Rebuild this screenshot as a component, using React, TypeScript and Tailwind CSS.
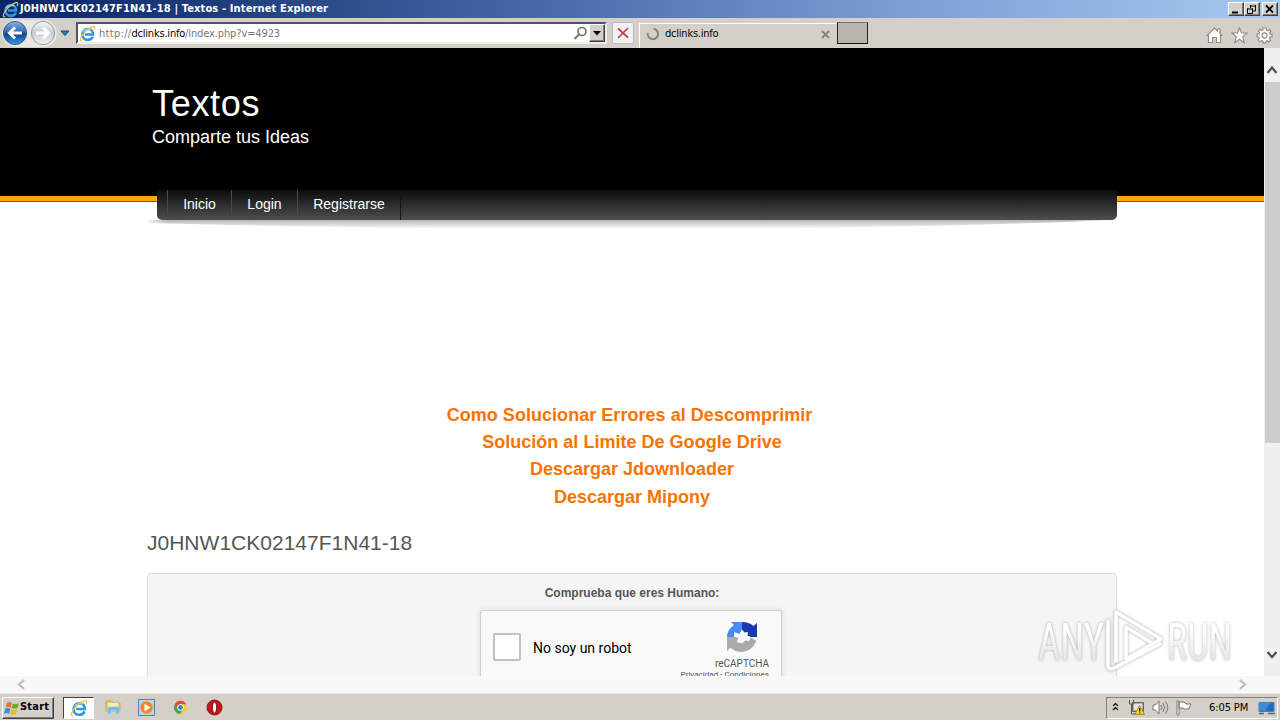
import { ReactNode } from "react";
import { clsx } from "clsx";

const navItems = [
  { label: "Inicio", width: "w-[63px]" },
  { label: "Login", width: "w-[65px]" },
  { label: "Registrarse", width: "w-[102px]" },
];

const helpLinks = [
  { label: "Como Solucionar Errores al Descomprimir", className: "-ml-[5px] h-[27px] tracking-[0.04px]" },
  { label: "Solución al Limite De Google Drive", className: "h-[27px] tracking-[0.02px]" },
  { label: "Descargar Jdownloader", className: "h-[28px]" },
  { label: "Descargar Mipony", className: "h-[27px]" },
];

function IeLogo({ size }: { size: number }) {
  return (
    <svg width={size} height={size} viewBox="0 0 16 16" fill="none" className="shrink-0">
      <path d="M13 11C12 13.2 10.3 14 8.2 14C5.2 14 3.2 12 3.2 9C3.2 6 5.3 3.8 8.4 3.8C11.4 3.8 13.2 6 13.2 8.9H5.5" stroke="#2f97dc" strokeWidth="2.4" />
      <path d="M4 6.7C5.2 4.6 8.6 3.2 11.4 4.6" stroke="#8ad9f7" strokeWidth="1.2" />
      <path d="M3 14.6C1 15.8 .6 13.4 2.4 10.6C5 6.2 11.2 1.2 14 1.5C15.3 1.7 15 3.4 14.2 4.8" stroke="#efc548" strokeWidth="1.1" />
    </svg>
  );
}

function ArrowCircle({ forward }: { forward?: boolean }) {
  return (
    <svg width="26" height="26" viewBox="0 0 26 26" className="shrink-0">
      <defs>
        <linearGradient id="backFill" x1="0" y1="0" x2="0" y2="1">
          <stop offset="0" stopColor="#8ab3e5" />
          <stop offset=".45" stopColor="#3268b7" />
          <stop offset=".55" stopColor="#123f91" />
          <stop offset="1" stopColor="#2fa0e6" />
        </linearGradient>
        <linearGradient id="forwardFill" x1="0" y1="0" x2="0" y2="1">
          <stop offset="0" stopColor="#f7f8fa" />
          <stop offset=".5" stopColor="#c4cbd3" />
          <stop offset="1" stopColor="#f4f5f7" />
        </linearGradient>
      </defs>
      <circle cx="13" cy="13" r="11.6" fill={forward ? "url(#forwardFill)" : "url(#backFill)"} stroke={forward ? "#9a9da3" : "#465d83"} />
      <path
        d={forward ? "M6 13H18M13 7.5L18.5 13L13 18.5" : "M20 13H8M13 7.5L7.5 13L13 18.5"}
        fill="none"
        stroke="#fff"
        strokeWidth="3"
      />
    </svg>
  );
}

function WindowButton({ children, className }: { children: ReactNode; className?: string }) {
  return (
    <div className={clsx("flex h-[14px] w-4 items-center justify-center border border-t-white border-r-[#404040] border-b-[#404040] border-l-white bg-[#d4d0c8] shadow-[inset_-1px_-1px_0_#808080]", className)}>
      <svg width="12" height="11" viewBox="0 0 12 11" fill="none" stroke="#000">
        {children}
      </svg>
    </div>
  );
}

function TitleBar() {
  return (
    <div className="flex h-[18px] items-center bg-[linear-gradient(90deg,#0a246a_0%,#254583_22%,#4d6ead_45%,#7a9ed3_70%,#a6caf0_100%)] pr-[2px] pl-[2px]">
      <IeLogo size={17} />
      <span className="ml-px text-[11px] leading-[18px] font-bold tracking-[0.14px] whitespace-nowrap text-white">
        J0HNW1CK02147F1N41-18 | Textos - Internet Explorer
      </span>
      <div className="ml-auto flex">
        <WindowButton>
          <path d="M2 8.5H8" strokeWidth="2" />
        </WindowButton>
        <WindowButton>
          <path d="M4 2H10M4.5 1V4M9.5 1V7H7M1 5H7M1.5 4.5V9.5H6.5V4.5" />
        </WindowButton>
        <WindowButton className="ml-[2px]">
          <path d="M2 1.5L9 8.5M9 1.5L2 8.5" strokeWidth="1.8" />
        </WindowButton>
      </div>
    </div>
  );
}

function Toolbar() {
  return (
    <div className="flex h-[30px] items-start bg-[#d4d0c8] pl-[2px]">
      <div className="mt-[2px] flex h-[27px] w-[55px] gap-[2px] rounded-full bg-[#e9e7e3]">
        <ArrowCircle />
        <ArrowCircle forward />
      </div>
      <svg width="10" height="7" viewBox="0 0 10 7" className="mt-[12px] ml-[3px]">
        <path d="M1 1H9L5 5.5Z" fill="#1b84bd" stroke="#1b436c" />
      </svg>
      <div className="mt-[4px] ml-[6px] flex h-[22px] w-[531px] items-center border-2 border-t-[#55515e] border-r-[#efede8] border-b-[#efede8] border-l-[#55515e] bg-white pl-px">
        <IeLogo size={17} />
        <span className="mt-[2px] ml-[3px] text-[11px] whitespace-nowrap text-[#777]">
          <span className="tracking-[0.3px]">http://</span>
          <span className="tracking-[-0.2px] text-black">dclinks.info</span>
          <span className="tracking-[-0.12px]">/index.php?v=4923</span>
        </span>
        <svg width="15" height="15" viewBox="0 0 15 15" fill="none" stroke="#777" strokeWidth="1.7" className="ml-auto">
          <circle cx="9" cy="5.5" r="4" />
          <path d="M6 8.5L1.5 13" strokeWidth="2" />
        </svg>
        <div className="ml-px flex h-[18px] w-[16px] items-center justify-center border border-t-white border-r-[#404040] border-b-[#404040] border-l-white bg-[#d4d0c8] shadow-[inset_-1px_-1px_0_#808080]">
          <svg width="8" height="5">
            <path d="M0 0H8L4 4.5Z" />
          </svg>
        </div>
      </div>
      <div className="mt-[4px] ml-[5px] flex h-[22px] w-[22px] items-center justify-center rounded-[2px] border border-[#b4b9c2] bg-[#f2f1f3]">
        <svg width="12" height="12" viewBox="0 0 12 12" stroke="#bc4540" strokeWidth="1.7">
          <path d="M1 1.5L11 10.5M11 1L1 11" />
        </svg>
      </div>
      <div className="mt-[5px] ml-[5px] flex h-[25px] w-[197px] items-center border-t border-l border-white pr-[6px] pb-[4px] pl-[6px]">
        <svg width="14" height="14" viewBox="0 0 14 14" fill="none" stroke="#85817b" strokeWidth="2">
          <path d="M7.5 1.8A5.2 5.2 0 1 1 1.8 6" />
        </svg>
        <span className="ml-[5px] text-[11px] tracking-[-0.22px]">dclinks.info</span>
        <svg width="9" height="9" viewBox="0 0 9 9" stroke="#85817b" strokeWidth="1.8" className="ml-auto">
          <path d="M1 1L8 8M8 1L1 8" />
        </svg>
      </div>
      <div className="mt-[4px] ml-[1px] h-[22px] w-[31px] border border-t-[#77736e] border-r-[#222] border-b-[#111] border-l-[#222] bg-[#b9b4ac]" />
      <div className="mt-[9px] mr-[7px] ml-auto flex gap-[8px]">
        <svg width="17" height="17" viewBox="0 0 17 17" fill="#fff" stroke="#8f8b86" strokeWidth="1.2">
          <path d="M2.5 8.5H1L8.5 1L11.5 4V2H14V6.5L16 8.5H14.5V15.5H10.5V10.5H6.5V15.5H2.5Z" />
        </svg>
        <svg width="17" height="17" viewBox="0 0 17 17" fill="#fff" stroke="#8f8b86" strokeWidth="1.1">
          <path d="M8.5 .8L10.5 6H16.2L11.7 9.6L13.3 15.6L8.5 12.2L3.7 15.6L5.3 9.6L.8 6H6.5Z" />
        </svg>
        <svg width="17" height="17" viewBox="0 0 17 17" fill="#fff" stroke="#8f8b86" strokeWidth="1.1">
          <path d="M7 1H10L10.4 3L12 3.6L13.7 2.4L15 4.3L13.6 5.7L14 7H16V10H14L13.4 11.6L14.6 13.2L12.8 15L11.2 13.7L10 14.1V16H7V14.1L5.6 13.6L4 14.8L2.1 13L3.4 11.3L3 10H1V7H3L3.5 5.5L2.2 4L4 2.2L5.5 3.4L7 3Z" />
          <circle cx="8.5" cy="8.5" r="2.6" />
        </svg>
      </div>
    </div>
  );
}

function SiteHeader() {
  return (
    <header>
      <div className="h-[148px] bg-black pt-[35px] pl-[152px] text-white">
        <h1 className="text-[36px] leading-[41px] tracking-[0.7px]">Textos</h1>
        <p className="mt-[3px] text-[18px] leading-[21px]">Comparte tus Ideas</p>
      </div>
      <div className="h-[6px] border-b border-[#75601f] bg-[#ffa60b]" />
      <nav className="relative -mt-[12px] ml-[157px] flex h-[30px] w-[960px] rounded-b-[5px] bg-linear-to-b from-[#0c0c0c] via-[#2e2e2e] to-[#4e4e4e] pl-[10px] text-[14px] leading-[28px] text-white">
        {navItems.map((item) => (
          <a key={item.label} className={clsx("box-content border-r border-l border-r-[#161616] border-l-[#4a4a4a] text-center [&+a]:-ml-px", item.width)}>
            {item.label}
          </a>
        ))}
      </nav>
      <svg width="970" height="10" viewBox="0 0 970 10" className="ml-[147px] block">
        <defs>
          <linearGradient id="navShadow" x1="0" y1="0" x2="0" y2="1">
            <stop offset="0" stopColor="#b5b5b5" />
            <stop offset="1" stopColor="#fff" />
          </linearGradient>
          <linearGradient id="shadowEnds" x1="0" y1="0" x2="1" y2="0">
            <stop offset="0" stopColor="#fff" stopOpacity=".8" />
            <stop offset=".02" stopColor="#fff" stopOpacity="0" />
            <stop offset=".95" stopColor="#fff" stopOpacity="0" />
            <stop offset="1" stopColor="#fff" stopOpacity=".9" />
          </linearGradient>
        </defs>
        <path d="M1 0H969Q750 9 485 9Q220 9 1 3Z" fill="url(#navShadow)" />
        <path d="M0 0H970V10H0Z" fill="url(#shadowEnds)" />
      </svg>
    </header>
  );
}

function RecaptchaLogo() {
  return (
    <svg width="32" height="32" viewBox="0 0 32 32">
      <path d="M5 1H16V9L13 14L8 11.5V16H1Q1 9 8 4Z" fill="#4a8af4" />
      <path d="M16 1Q23 1 27.5 5L31 2V16H16V8Z" fill="#1c3aa9" />
      <path d="M1 16V30L4.5 26.5Q9 31 16 31Q25 31 30.5 20L24 16H14Z" fill="#ababab" />
      <path d="M8.5 11L13.5 13L16 8.5L18.5 11.5L22 11L21.5 14.5L25 16L23 20L19.5 19.5L16 22.5L10.5 21L12.5 17.5L8.5 15Z" fill="#f9f9f9" />
    </svg>
  );
}

function Captcha() {
  return (
    <div className="mt-[9px] ml-[332px] flex h-[78px] w-[302px] justify-between rounded-[3px] border border-[#cfcfcf] bg-[#f9f9f9] pr-[12px] pl-[12px] shadow-[0_0_4px_1px_rgba(0,0,0,0.08)]">
      <div className="flex h-[72px] shrink-0 items-center">
        <div className="h-7 w-7 rounded-[2px] border-2 border-[#c1c1c1] bg-white" />
        <span className="mt-[2px] ml-3 font-['Roboto',sans-serif] text-[14px] whitespace-nowrap text-black">No soy un robot</span>
      </div>
      <div className="flex flex-col items-end pt-[10px] text-[#555]">
        <div className="mr-[11px]">
          <RecaptchaLogo />
        </div>
        <span className="mt-[4px] font-['Roboto',sans-serif] text-[10px] leading-[14px]">reCAPTCHA</span>
        <span className="-mt-px font-['Roboto',sans-serif] text-[8px] leading-[10px] tracking-[0.03px] whitespace-nowrap">Privacidad - Condiciones</span>
      </div>
    </div>
  );
}

function Page() {
  return (
    <main className="h-[628px] w-[1264px] overflow-hidden bg-white font-['Liberation_Sans',Arial,sans-serif] [font-stretch:normal]">
      <SiteHeader />
      <div className="ml-[147px] w-[970px]">
        <div className="flex flex-col items-center pt-[172px] text-[18px] leading-[27px] font-bold text-[#f97300]">
          {helpLinks.map((link) => (
            <a key={link.label} className={link.className}>
              {link.label}
            </a>
          ))}
        </div>
        <h2 className="mt-[19px] text-[21px] leading-[26px] tracking-[0.01px] text-[#555]">J0HNW1CK02147F1N41-18</h2>
        <div className="mt-[17px] h-[160px] rounded-[4px] border border-[#dedede] bg-[#f5f5f5] pt-[10px]">
          <p className="pt-px text-center text-[12px] leading-[16px] font-bold text-[#555]">Comprueba que eres Humano:</p>
          <Captcha />
        </div>
      </div>
    </main>
  );
}

function VerticalScrollbar() {
  return (
    <div className="flex h-[628px] w-4 flex-col items-center bg-[#f0f0f0]">
      <svg width="12" height="34" viewBox="0 0 12 34" fill="none" stroke="#505050" strokeWidth="2.2">
        <path d="M1.5 25L6 19.5L10.5 25" />
      </svg>
      <div className="h-[361px] w-[15px] bg-[#cdcdcd]" />
      <svg width="12" height="10" viewBox="0 0 12 10" fill="none" stroke="#505050" strokeWidth="2.2" className="mt-auto mb-[16px]">
        <path d="M1.5 2L6 7L10.5 2" />
      </svg>
    </div>
  );
}

function HorizontalScrollbar() {
  return (
    <div className="flex h-4 items-center justify-between bg-[#f8f8f8] pr-[32px] pl-[16px]">
      <svg width="10" height="11" viewBox="0 0 10 11" fill="none" stroke="#bdbdbd" strokeWidth="2.2">
        <path d="M8 1L3 5.5L8 10" />
      </svg>
      <svg width="10" height="11" viewBox="0 0 10 11" fill="none" stroke="#bdbdbd" strokeWidth="2.2">
        <path d="M2 1L7 5.5L2 10" />
      </svg>
    </div>
  );
}

function Watermark() {
  return (
    <svg width="220" height="80" viewBox="0 0 220 80" className="pointer-events-none absolute top-[605px] left-[1033px] drop-shadow-[0_0_1.5px_rgba(0,0,0,0.3)]">
      <defs>
        <linearGradient id="markFill" x1="0" y1="0" x2="0" y2="1">
          <stop offset=".3" stopColor="#fff" />
          <stop offset=".8" stopColor="#e3e3e3" />
        </linearGradient>
      </defs>
      <g fill="url(#markFill)" fontFamily="Roboto, sans-serif" fontSize="52" fontWeight="400">
        <text x="5" y="55" textLength="66" lengthAdjust="spacingAndGlyphs">ANY</text>
        <text x="134" y="55" textLength="65" lengthAdjust="spacingAndGlyphs">RUN</text>
      </g>
      <g fill="none" strokeLinejoin="round" strokeLinecap="round">
        <path d="M75 16V61Q76 66 83 62L127 39M83 56V7L128 34L93 54V22L119 38" stroke="#e6e6e6" strokeWidth="4.2" />
        <path d="M75 16V61Q76 66 83 62L127 39M83 56V7L128 34L93 54V22L119 38" stroke="#fff" strokeWidth="3" />
      </g>
    </svg>
  );
}

function Taskbar() {
  return (
    <div className="flex h-7 items-center border-t border-white bg-[#d4d0c8] pt-[2px] pr-[2px] pl-[2px] shadow-[inset_0_1px_0_#e9e7e3]">
      <button className="flex h-[22px] w-[52px] items-center border border-t-white border-r-[#404040] border-b-[#404040] border-l-white pl-px text-[11px] font-bold shadow-[inset_-1px_-1px_0_#808080]">
        <svg width="16" height="16" viewBox="0 0 16 16" className="shrink-0">
          <path d="M3 3Q5 1 8 3L6.5 8Q4 6 1.5 8Z" fill="#e87532" />
          <path d="M9 3.5Q12 5 15 3L13.5 8Q11 9 7.5 8Z" fill="#67a92e" />
          <path d="M1.2 9Q3.7 7 6.2 9L5 14Q2.5 12 0 14Z" fill="#398bd4" />
          <path d="M7.3 9Q10 11 13.3 9L12 14Q9 16 5.8 14Z" fill="#edba27" />
        </svg>
        <span className="tracking-[0.2px]">Start</span>
      </button>
      <div className="ml-[9px] flex h-[22px] w-[31px] items-center justify-center border border-t-[#404040] border-r-white border-b-white border-l-[#404040] bg-white">
        <IeLogo size={18} />
      </div>
      <svg width="17" height="17" viewBox="0 0 17 17" className="ml-[11px]">
        <path d="M1 2H7L8 4H15V12H1Z" fill="#e9cc6a" stroke="#c6a94b" />
        <path d="M3 4H13V8H3Z" fill="#f8efb5" />
        <path d="M3 8H14V15H11V11H6V15H3Z" fill="#6cb5dc" stroke="#9bd1e7" />
      </svg>
      <svg width="17" height="17" viewBox="0 0 17 17" className="ml-[16px]">
        <path d="M.5 .5H16.5V16.5H.5Z" fill="#b5d8ef" stroke="#4685ba" />
        <circle cx="8.5" cy="8.5" r="6.3" fill="#f18a21" />
        <path d="M6.5 4.7L12.5 8.5L6.5 12.3Z" fill="#fff" />
      </svg>
      <svg width="15" height="15" viewBox="0 0 16 16" className="ml-[18px]">
        <circle cx="8" cy="8" r="7" fill="#f4ca34" />
        <path d="M1.9 4.5A7 7 0 0 1 14.2 4.5H8L5 9Z" fill="#dc4c3e" />
        <path d="M1.9 4.5A7 7 0 0 0 7.5 15L10.5 9.5L5 9Z" fill="#3fa35b" />
        <circle cx="8" cy="8" r="3.5" fill="#fff" />
        <circle cx="8" cy="8" r="2.6" fill="#3b7fc4" />
      </svg>
      <svg width="17" height="17" viewBox="0 0 17 17" className="ml-[18px]">
        <circle cx="8.5" cy="8.5" r="7.5" fill="#bf151b" stroke="#8c161a" />
        <ellipse cx="8.5" cy="8.5" rx="2.1" ry="5.6" fill="#fff" stroke="#711216" />
      </svg>
      <div className="ml-auto flex h-[22px] w-[172px] items-center border border-t-[#808080] border-r-white border-b-white border-l-[#808080]">
        <svg width="7" height="9" viewBox="0 0 7 9" fill="none" stroke="#000" strokeWidth="1.2" className="ml-[5px] -mt-[2px]">
          <path d="M1 4L3.5 1.5L6 4M1 8L3.5 5.5L6 8" />
        </svg>
        <svg width="17" height="17" viewBox="0 0 17 17" className="ml-[9px]">
          <path d="M4.5 3.5H15.5V12.5H4.5Z" fill="#aaa" stroke="#666" />
          <path d="M6 5H14V11H6Z" fill="#e4e4e4" />
          <path d="M1.5 1V5H5.5V1M3.5 5V15H7" fill="none" stroke="#555" />
          <path d="M11.5 6.5L16.5 15.5H7Z" fill="#f5d526" stroke="#ad8e12" />
          <path d="M11.7 9V12.5M11.7 13.5V14.5" stroke="#222" strokeWidth="1.3" />
        </svg>
        <svg width="17" height="15" viewBox="0 0 17 15" fill="none" stroke="#777" className="ml-[7px]">
          <path d="M1 5H3.5L7 1V14L3.5 10H1Z" fill="#fff" />
          <path d="M9 5Q10.5 7.5 9 10M11 3Q14 7.5 11 12M13.5 1.5Q18 7.5 13.5 13.5" />
        </svg>
        <svg width="17" height="16" viewBox="0 0 17 16" fill="#fff" stroke="#777" className="ml-[7px]">
          <path d="M1 1H3V15H1ZM3 2H8L10 4H15L12.5 9H8L7 8H3Z" />
        </svg>
        <span className="mt-px ml-[16px] text-[11px] tracking-[-0.1px] whitespace-nowrap">6:05 PM</span>
        <svg width="18" height="14" viewBox="0 0 18 14" className="mr-[1px] ml-auto shrink-0">
          <path d="M1 1.5H16V10.5H1Z" fill="#2468bd" stroke="#477baf" />
          <path d="M1 2H14Q9 4 8 10H1Z" fill="#408ad5" />
          <path d="M1 12.5H6M10 12.5H17" stroke="#426890" strokeWidth="1.5" />
        </svg>
      </div>
    </div>
  );
}

export default function App() {
  return (
    <div className="relative h-[720px] w-[1280px] overflow-hidden bg-white font-['DejaVu_Sans_Condensed','DejaVu_Sans',sans-serif] [font-stretch:condensed]">
      <TitleBar />
      <Toolbar />
      <div className="flex">
        <Page />
        <VerticalScrollbar />
      </div>
      <HorizontalScrollbar />
      <Taskbar />
      <Watermark />
    </div>
  );
}
